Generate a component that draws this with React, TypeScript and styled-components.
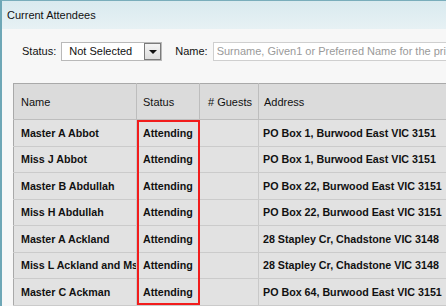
import React from 'react';
import styled, { createGlobalStyle } from 'styled-components';

const GlobalStyle = createGlobalStyle`
  html, body {
    margin: 0;
    padding: 0;
    background: #f7f7f7;
  }
  body {
    font-family: 'Liberation Sans', Arial, sans-serif;
    font-size: 11px;
    color: #111;
  }
`;

const Panel = styled.div`
  width: 446px;
  height: 306px;
  box-sizing: border-box;
  border-left: 2px solid #6ea7b6;
  border-top: 1px solid #79adbb;
  background: #f7f7f7;
  overflow: hidden;
`;

const TitleBar = styled.div`
  height: 28px;
  display: flex;
  align-items: center;
  padding-left: 5px;
  background: linear-gradient(#d9eaef, #e7f1f4);
  font-size: 11px;
  color: #111;
`;

const FilterRow = styled.div`
  display: flex;
  align-items: center;
  margin-top: 12px;
  padding-left: 20px;
  height: 20px;
  white-space: nowrap;
`;

const Label = styled.span`
  flex: none;
  font-size: 11px;
  color: #111;
  margin-right: 5px;
`;

const Select = styled.div`
  flex: none;
  width: 101px;
  height: 19px;
  box-sizing: border-box;
  border: 1px solid #b9b9b9;
  background: #fff;
  display: flex;
  align-items: center;
  justify-content: space-between;
  padding-left: 7px;
  margin-right: 13px;
  font-size: 11px;
`;

const SelectButton = styled.div`
  width: 17px;
  height: 17px;
  box-sizing: border-box;
  border: 1px solid #7b7b7b;
  background: linear-gradient(#f4f4f4, #dedede);
  display: flex;
  align-items: center;
  justify-content: center;
`;

const Arrow = styled.span`
  width: 0;
  height: 0;
  margin-top: 2px;
  border-left: 4px solid transparent;
  border-right: 4px solid transparent;
  border-top: 4px solid #111;
`;

const Input = styled.input`
  flex: none;
  width: 260px;
  height: 19px;
  box-sizing: border-box;
  border: 1px solid #cfcfcf;
  background: #fff;
  padding: 0 0 0 3px;
  margin: 0;
  font-family: 'Liberation Sans', Arial, sans-serif;
  font-size: 11px;
  outline: none;
  &::placeholder {
    color: #9a9a9a;
  }
`;

const TableWrap = styled.div`
  position: relative;
  margin: 22px 0 0 11px;
  width: 460px;
`;

const Table = styled.table`
  border-collapse: collapse;
  table-layout: fixed;
  width: 460px;
  background: #e2e2e2;
  border-top: 1px solid #a9a9a9;
  border-left: 1px solid #a9a9a9;
`;

const HeadCell = styled.th<{ $w: number; $pad?: number }>`
  width: ${(p) => p.$w}px;
  height: 36px;
  padding: 0 0 0 ${(p) => p.$pad ?? 7}px;
  box-sizing: border-box;
  text-align: left;
  font-weight: normal;
  font-size: 11px;
  color: #111;
  background: #dbdbdb;
  border-right: 1px solid #bdbdbd;
  border-bottom: 1px solid #bdbdbd;
  white-space: nowrap;
  overflow: hidden;
`;

const Cell = styled.td<{ $pad?: number }>`
  height: 26.5px;
  padding: 0 0 0 ${(p) => p.$pad ?? 7}px;
  box-sizing: border-box;
  font-weight: bold;
  font-size: 10.7px;
  color: #111;
  border-right: 1px solid #c9c9c9;
  border-bottom: 1px solid #cbcbcb;
  white-space: nowrap;
  overflow: hidden;
`;

const Highlight = styled.div`
  position: absolute;
  left: 124px;
  top: 37px;
  width: 63px;
  height: 185px;
  box-sizing: border-box;
  border: 2px solid #f21c1c;
  pointer-events: none;
`;

const rows = [
  { name: 'Master A Abbot', status: 'Attending', address: 'PO Box 1, Burwood East VIC 3151' },
  { name: 'Miss J Abbot', status: 'Attending', address: 'PO Box 1, Burwood East VIC 3151' },
  { name: 'Master B Abdullah', status: 'Attending', address: 'PO Box 22, Burwood East VIC 3151' },
  { name: 'Miss H Abdullah', status: 'Attending', address: 'PO Box 22, Burwood East VIC 3151' },
  { name: 'Master A Ackland', status: 'Attending', address: '28 Stapley Cr, Chadstone VIC 3148' },
  { name: 'Miss L Ackland and Ms Ackland', status: 'Attending', address: '28 Stapley Cr, Chadstone VIC 3148' },
  { name: 'Master C Ackman', status: 'Attending', address: 'PO Box 64, Burwood East VIC 3151' },
];

export default function App() {
  return (
    <>
      <GlobalStyle />
      <Panel>
        <TitleBar>Current Attendees</TitleBar>
        <FilterRow>
          <Label>Status:</Label>
          <Select>
            Not Selected
            <SelectButton>
              <Arrow />
            </SelectButton>
          </Select>
          <Label>Name:</Label>
          <Input placeholder="Surname, Given1 or Preferred Name for the primary attendee" />
        </FilterRow>
        <TableWrap>
          <Table>
            <thead>
              <tr>
                <HeadCell $w={123}>Name</HeadCell>
                <HeadCell $w={63} $pad={6}>Status</HeadCell>
                <HeadCell $w={59} $pad={8}># Guests</HeadCell>
                <HeadCell $w={215} $pad={5}>Address</HeadCell>
              </tr>
            </thead>
            <tbody>
              {rows.map((r, i) => (
                <tr key={i}>
                  <Cell>{r.name}</Cell>
                  <Cell $pad={6}>{r.status}</Cell>
                  <Cell />
                  <Cell $pad={4}>{r.address}</Cell>
                </tr>
              ))}
            </tbody>
          </Table>
          <Highlight />
        </TableWrap>
      </Panel>
    </>
  );
}
